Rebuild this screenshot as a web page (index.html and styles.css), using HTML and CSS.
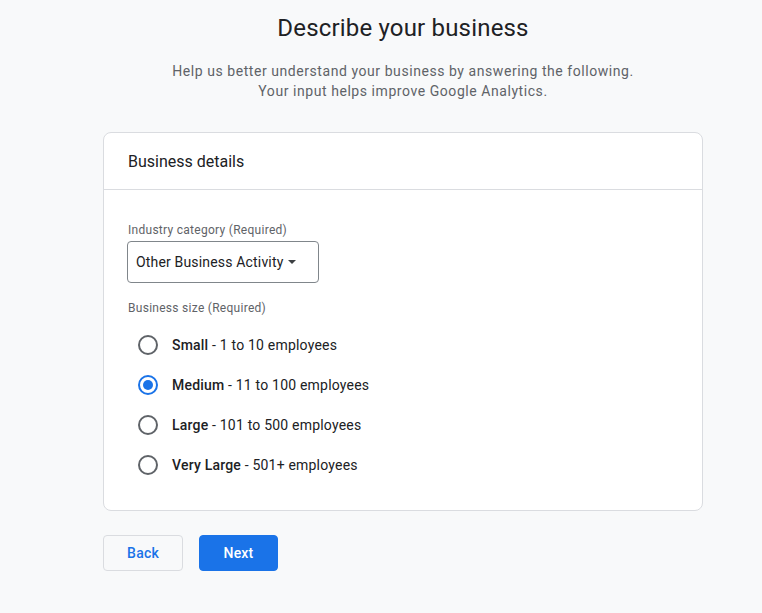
FILE: index.html
```html
<!DOCTYPE html>
<html lang="en">
<head>
<meta charset="utf-8">
<title>Describe your business</title>
<link rel="stylesheet" href="styles.css">
</head>
<body>
<main class="page">
  <div class="column">
    <h1 class="title">Describe your business</h1>
    <p class="subtitle">Help us better understand your business by answering the following.<br>Your input helps improve Google Analytics.</p>

    <section class="card">
      <header class="card-header">Business details</header>
      <div class="card-body">
        <div class="field-label">Industry category (Required)</div>
        <div class="select">
          <span class="select-text">Other Business Activity</span>
          <span class="select-arrow"></span>
        </div>

        <div class="field-label size-label">Business size (Required)</div>
        <div class="radio-group">
          <div class="radio-row">
            <span class="radio-touch"><span class="radio"></span></span>
            <span class="radio-text"><b>Small</b> - 1 to 10 employees</span>
          </div>
          <div class="radio-row">
            <span class="radio-touch"><span class="radio checked"></span></span>
            <span class="radio-text"><b>Medium</b> - 11 to 100 employees</span>
          </div>
          <div class="radio-row">
            <span class="radio-touch"><span class="radio"></span></span>
            <span class="radio-text"><b>Large</b> - 101 to 500 employees</span>
          </div>
          <div class="radio-row">
            <span class="radio-touch"><span class="radio"></span></span>
            <span class="radio-text"><b>Very Large</b> - 501+ employees</span>
          </div>
        </div>
      </div>
    </section>

    <div class="actions">
      <button class="btn btn-back">Back</button>
      <button class="btn btn-next">Next</button>
    </div>
  </div>
</main>
</body>
</html>
```

FILE: styles.css
```css
* { box-sizing: border-box; }

html, body {
  margin: 0;
  padding: 0;
  background: #f8f9fa;
  font-family: Roboto, "Liberation Sans", Arial, sans-serif;
  color: #202124;
}

.page {
  padding: 12px 0 0 103px;
}

.column {
  width: 600px;
}

.title {
  margin: 0;
  font-size: 24px;
  line-height: 32px;
  font-weight: 400;
  letter-spacing: 0.18px;
  text-align: center;
  color: #202124;
}

.subtitle {
  margin: 17px 0 0;
  font-size: 14px;
  line-height: 20px;
  letter-spacing: 0.56px;
  text-align: center;
  color: #5f6368;
}

.card {
  margin-top: 31px;
  background: #ffffff;
  border: 1px solid #dadce0;
  border-radius: 8px;
}

.card-header {
  height: 57px;
  padding: 0 24px;
  display: flex;
  align-items: center;
  font-size: 16px;
  color: #202124;
  border-bottom: 1px solid #dadce0;
}

.card-body {
  padding: 32px 24px 25px;
}

.field-label {
  font-size: 12px;
  line-height: 16px;
  letter-spacing: 0.28px;
  color: #5f6368;
}

.select {
  margin-top: 3px;
  margin-left: -1px;
  width: 192px;
  height: 42px;
  border: 1px solid #80868b;
  border-radius: 4px;
  display: flex;
  align-items: center;
  padding: 0 8px;
  font-size: 14px;
  letter-spacing: 0.17px;
  color: #202124;
}

.select-arrow {
  margin-left: 5px;
  width: 0;
  height: 0;
  border-left: 4px solid transparent;
  border-right: 4px solid transparent;
  border-top: 4px solid #3c4043;
}

.size-label {
  margin-top: 17px;
}

.radio-group {
  margin-top: 9px;
  display: flex;
  flex-direction: column;
}

.radio-row {
  height: 40px;
  display: flex;
  align-items: center;
}

.radio-touch {
  width: 40px;
  height: 40px;
  display: flex;
  align-items: center;
  justify-content: center;
}

.radio {
  width: 20px;
  height: 20px;
  border: 2px solid #5f6368;
  border-radius: 50%;
  display: flex;
  align-items: center;
  justify-content: center;
}

.radio.checked {
  border-color: #1a73e8;
}

.radio.checked::after {
  content: "";
  width: 10px;
  height: 10px;
  border-radius: 50%;
  background: #1a73e8;
}

.radio-text {
  margin-left: 4px;
  font-size: 14px;
  letter-spacing: 0.2px;
  color: #202124;
}

.radio-text b {
  font-weight: 500;
}

.actions {
  margin-top: 24px;
  display: flex;
  gap: 16px;
}

.btn {
  height: 36px;
  border-radius: 4px;
  font-family: Roboto, "Liberation Sans", Arial, sans-serif;
  font-size: 14px;
  font-weight: 500;
  letter-spacing: 0.2px;
  padding: 0;
  cursor: pointer;
}

.btn-back {
  width: 80px;
  background: #f8f9fa;
  border: 1px solid #dadce0;
  color: #1a73e8;
}

.btn-next {
  width: 79px;
  background: #1a73e8;
  border: 1px solid #1a73e8;
  color: #ffffff;
}
```
